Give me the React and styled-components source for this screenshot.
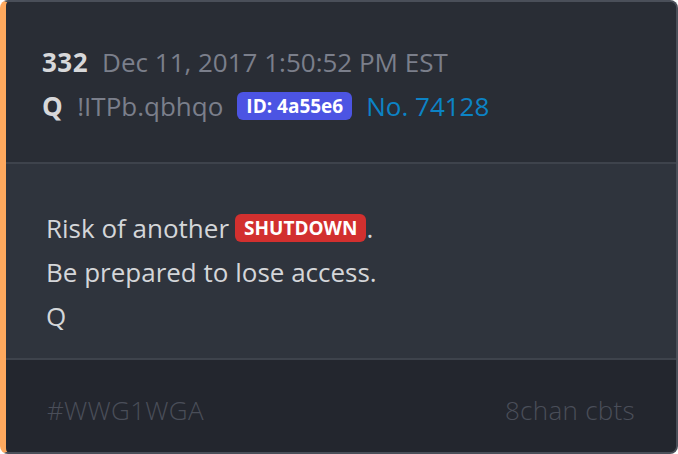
import React from "react";
import styled, { createGlobalStyle } from "styled-components";

const Global = createGlobalStyle`
  html, body { margin: 0; padding: 0; background: #ffffff; }
  body { font-family: "Open Sans", "Noto Sans", sans-serif; }
  * { box-sizing: border-box; }
`;

const Card = styled.div`
  width: 678px;
  height: 454px;
  display: flex;
  flex-direction: column;
  border: 2px solid #4a4f59;
  border-left: 6px solid #ffa95e;
  border-radius: 8px;
  overflow: hidden;
  background: #292d35;
  font-family: "Open Sans", sans-serif;
  font-size: 26px;
  line-height: 44px;
`;

const Header = styled.div`
  display: flex;
  flex-direction: column;
  padding: 38px 36px 34px;
  background: #292d35;
  border-bottom: 2px solid #3e434c;
`;

const Row = styled.div`
  display: flex;
  align-items: center;
  gap: 14px;
  white-space: nowrap;
`;

const Strong = styled.span`
  font-weight: 700;
  color: #d7d8da;
  letter-spacing: 0.5px;
`;

const Muted = styled.span`
  color: #7b7f8b;
`;

const Badge = styled.span`
  display: inline-flex;
  align-items: center;
  height: 28px;
  padding: 0 9px;
  margin: ${(p) => p.$m || "0"};
  border-radius: 6px;
  background: ${(p) => p.$bg};
  color: #ffffff;
  font-weight: 700;
  font-size: 19px;
  line-height: 28px;
`;

const Link = styled.span`
  color: #0c83c5;
`;

const Body = styled.div`
  padding: 42px 40px 20px;
  background: #2f343d;
  border-bottom: 2px solid #3e434c;
  color: #d4d6d9;
`;

const Line = styled.div`
  display: flex;
  align-items: center;
  white-space: pre;
`;

const Footer = styled.div`
  flex: 1;
  display: flex;
  justify-content: space-between;
  align-items: flex-start;
  padding: 28px 41px 0 41px;
  background: #23262e;
  color: #4a4e59;
  font-weight: 300;
  letter-spacing: 0.3px;
`;

export default function App() {
  return (
    <>
      <Global />
      <Card>
        <Header>
          <Row>
            <Strong>332</Strong>
            <Muted>Dec 11, 2017 1:50:52 PM EST</Muted>
          </Row>
          <Row>
            <Strong>Q</Strong>
            <Muted>!ITPb.qbhqo</Muted>
            <Badge $bg="#4c54e3">ID: 4a55e6</Badge>
            <Link>No. 74128</Link>
          </Row>
        </Header>
        <Body>
          <Line>
            Risk of another
            <Badge $bg="#d2302f" $m="0 0 0 6px">SHUTDOWN</Badge>.
          </Line>
          <Line>Be prepared to lose access.</Line>
          <Line>Q</Line>
        </Body>
        <Footer>
          <span>#WWG1WGA</span>
          <span>8chan cbts</span>
        </Footer>
      </Card>
    </>
  );
}
